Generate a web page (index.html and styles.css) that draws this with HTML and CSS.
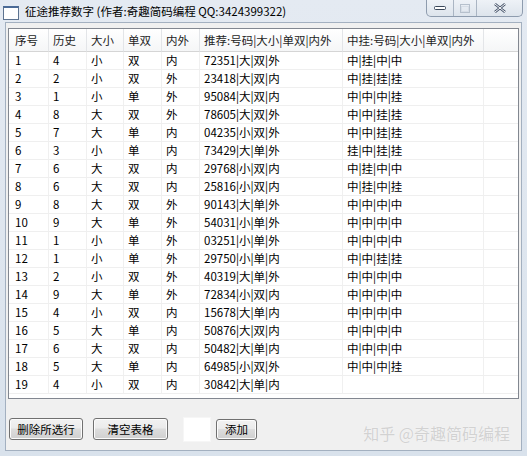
FILE: index.html
```html
<!DOCTYPE html>
<html lang="zh-CN">
<head>
    <meta charset="UTF-8">
    <title>征途推荐数字</title>
    <link rel="stylesheet" href="styles.css">
</head>
<body>

<div class="window">
    <div class="titlebar">
        <span class="app-icon"></span>
        <span class="title">征途推荐数字 (作者:奇趣简码编程 QQ:3424399322)</span>
        <div class="caption">
            <span class="cap-btn cap-min"><svg width="12" height="6" viewBox="0 0 12 6"><rect x="0.5" y="1.5" width="11" height="3" rx="1" fill="#fff" stroke="#39475a"/></svg></span>
            <span class="cap-btn cap-max"><svg width="10" height="9" viewBox="0 0 10 9"><rect x="0.5" y="0.5" width="9" height="8" fill="none" stroke="#b6c0cc"/><rect x="1.5" y="2.5" width="7" height="5" fill="none" stroke="#d6dde6"/></svg></span>
            <span class="cap-btn cap-close"><svg width="12" height="10" viewBox="0 0 12 10"><path d="M1 1 L11 9 M11 1 L1 9" stroke="#45536a" stroke-width="2.6"/><path d="M1 1 L11 9 M11 1 L1 9" stroke="#fff" stroke-width="1"/></svg></span>
        </div>
    </div>

    <div class="client">
        <div class="grid">
            <table>
                <colgroup>
                    <col style="width:40px"><col style="width:38px"><col style="width:37px"><col style="width:38px">
                    <col style="width:38px"><col style="width:143px"><col style="width:141px"><col>
                </colgroup>
                <thead>
                    <tr><th>序号</th><th>历史</th><th>大小</th><th>单双</th><th>内外</th><th>推荐:号码|大小|单双|内外</th><th>中挂:号码|大小|单双|内外</th><th></th></tr>
                </thead>
                <tbody>
                    <tr><td>1</td><td>4</td><td>小</td><td>双</td><td>内</td><td>72351|大|双|外</td><td>中|挂|中|中</td><td></td></tr>
                    <tr><td>2</td><td>2</td><td>小</td><td>双</td><td>外</td><td>23418|大|双|内</td><td>中|挂|挂|挂</td><td></td></tr>
                    <tr><td>3</td><td>1</td><td>小</td><td>单</td><td>外</td><td>95084|大|双|内</td><td>中|中|中|挂</td><td></td></tr>
                    <tr><td>4</td><td>8</td><td>大</td><td>双</td><td>外</td><td>78605|大|双|外</td><td>中|中|挂|挂</td><td></td></tr>
                    <tr><td>5</td><td>7</td><td>大</td><td>单</td><td>内</td><td>04235|小|双|外</td><td>中|中|挂|挂</td><td></td></tr>
                    <tr><td>6</td><td>3</td><td>小</td><td>单</td><td>内</td><td>73429|大|单|外</td><td>挂|中|挂|挂</td><td></td></tr>
                    <tr><td>7</td><td>6</td><td>大</td><td>双</td><td>内</td><td>29768|小|双|内</td><td>中|挂|中|中</td><td></td></tr>
                    <tr><td>8</td><td>6</td><td>大</td><td>双</td><td>内</td><td>25816|小|双|内</td><td>中|挂|中|挂</td><td></td></tr>
                    <tr><td>9</td><td>8</td><td>大</td><td>双</td><td>外</td><td>90143|大|单|外</td><td>中|中|中|中</td><td></td></tr>
                    <tr><td>10</td><td>9</td><td>大</td><td>单</td><td>外</td><td>54031|小|单|外</td><td>中|中|中|中</td><td></td></tr>
                    <tr><td>11</td><td>1</td><td>小</td><td>单</td><td>外</td><td>03251|小|单|外</td><td>中|中|中|中</td><td></td></tr>
                    <tr><td>12</td><td>1</td><td>小</td><td>单</td><td>外</td><td>29750|小|单|内</td><td>中|中|挂|挂</td><td></td></tr>
                    <tr><td>13</td><td>2</td><td>小</td><td>双</td><td>外</td><td>40319|大|单|外</td><td>中|中|中|中</td><td></td></tr>
                    <tr><td>14</td><td>9</td><td>大</td><td>单</td><td>外</td><td>72834|小|双|内</td><td>中|中|中|中</td><td></td></tr>
                    <tr><td>15</td><td>4</td><td>小</td><td>双</td><td>内</td><td>15678|大|单|内</td><td>中|中|中|中</td><td></td></tr>
                    <tr><td>16</td><td>5</td><td>大</td><td>单</td><td>内</td><td>50876|大|双|内</td><td>中|中|中|中</td><td></td></tr>
                    <tr><td>17</td><td>6</td><td>大</td><td>双</td><td>内</td><td>50482|大|单|内</td><td>中|中|中|中</td><td></td></tr>
                    <tr><td>18</td><td>5</td><td>大</td><td>单</td><td>内</td><td>64985|小|双|外</td><td>中|中|中|挂</td><td></td></tr>
                    <tr><td>19</td><td>4</td><td>小</td><td>双</td><td>内</td><td>30842|大|单|内</td><td></td><td></td></tr>
                </tbody>
            </table>
        </div>

        <div class="toolbar">
            <button class="btn btn-del">删除所选行</button>
            <button class="btn btn-clear">清空表格</button>
            <input type="text" class="num-input">
            <button class="btn btn-add">添加</button>
            <span class="watermark">知乎 @奇趣简码编程</span>
        </div>
    </div>
</div>

</body>
</html>
```

FILE: styles.css
```css
body {
    margin: 0;
    padding: 0;
    font-family: "Noto Sans CJK SC", "Noto Sans", sans-serif;
    font-size: 11px;
    color: #000;
    background: #dfe6ef;
}
.window {
    width: 527px;
    height: 456px;
    box-sizing: border-box;
    padding: 0 5px 5px 5px;
    background: linear-gradient(to bottom, #e4eaf2, #d9e2ec);
    display: flex;
    flex-direction: column;
}
/* 标题栏 */
.titlebar {
    height: 22px;
    display: flex;
    align-items: flex-start;
    flex-shrink: 0;
}
.app-icon {
    width: 14px;
    height: 11px;
    margin: 6px 0 0 -2px;
    background: #fff;
    border: 1px solid #5d7390;
    border-top: 2px solid #4a6a96;
}
.title {
    margin-left: 6px;
    line-height: 23px;
    font-size: 11.5px;
    color: #000;
}
.caption {
    margin-left: auto;
    margin-right: -1px;
    display: flex;
    height: 16px;
    border: 1px solid #8e9cae;
    border-top: none;
    border-radius: 0 0 5px 5px;
    overflow: hidden;
    background: linear-gradient(to bottom, #eef2f7, #dde4ec);
}
.cap-btn {
    display: flex;
    align-items: center;
    justify-content: center;
}
.cap-min {
    width: 26px;
    border-right: 1px solid #aab5c3;
}
.cap-max {
    width: 22px;
    border-right: 1px solid #aab5c3;
}
.cap-close {
    width: 45px;
}
/* 窗口客户区 */
.client {
    flex: 1;
    background: #f0f0f0;
    border: 1px solid #a3b0c0;
    display: flex;
    flex-direction: column;
}
.grid {
    margin: 5px 2px 0 2px;
    height: 371px;
    box-sizing: border-box;
    border: 1px solid #828790;
    background: #fff;
}
.grid table {
    width: 100%;
    table-layout: fixed;
    border-collapse: separate;
    border-spacing: 0;
}
.grid th, .grid td {
    box-sizing: border-box;
    padding: 0 0 0 4px;
    text-align: left;
    font-weight: normal;
    white-space: nowrap;
    overflow: hidden;
}
.grid th:first-child, .grid td:first-child {
    padding-left: 6px;
}
.grid th {
    height: 23px;
    background: linear-gradient(to bottom, #ffffff, #f5f6f7);
    border-right: 1px solid #e3e5e8;
    border-bottom: 1px solid #d5d5d5;
    color: #1e1e1e;
    font-size: 11.5px;
}
.grid td {
    height: 18px;
    border-right: 1px solid #f0f0f0;
    border-bottom: 1px solid #efefef;
    line-height: 17px;
    font-size: 11.5px;
}
.grid th:last-child, .grid td:last-child {
    border-right: none;
}
/* 底部按钮 */
.toolbar {
    display: flex;
    align-items: center;
    margin-top: 14px;
    padding: 0 11px 0 3px;
}
.btn {
    font-family: "Noto Sans CJK SC", sans-serif;
    font-size: 11.5px;
    height: 22px;
    padding: 0;
    border: 1px solid #707070;
    border-radius: 3px;
    background: linear-gradient(to bottom, #f2f2f2 0%, #ebebeb 45%, #dddddd 50%, #cfcfcf 100%);
    color: #000;
    box-shadow: inset 0 0 0 1px #fcfcfc;
}
.btn-del {
    width: 74px;
}
.btn-clear {
    width: 75px;
    margin-left: 10px;
}
.num-input {
    width: 28px;
    height: 25px;
    box-sizing: border-box;
    margin-left: 15px;
    border: 1px solid #f6f6f6;
    background: #fff;
}
.btn-add {
    width: 41px;
    height: 21px;
    margin-left: 5px;
}
.watermark {
    margin-left: auto;
    margin-top: 8px;
    font-size: 16px;
    color: #d2d2d2;
    text-shadow: 0 0 1px #fff;
}
```
